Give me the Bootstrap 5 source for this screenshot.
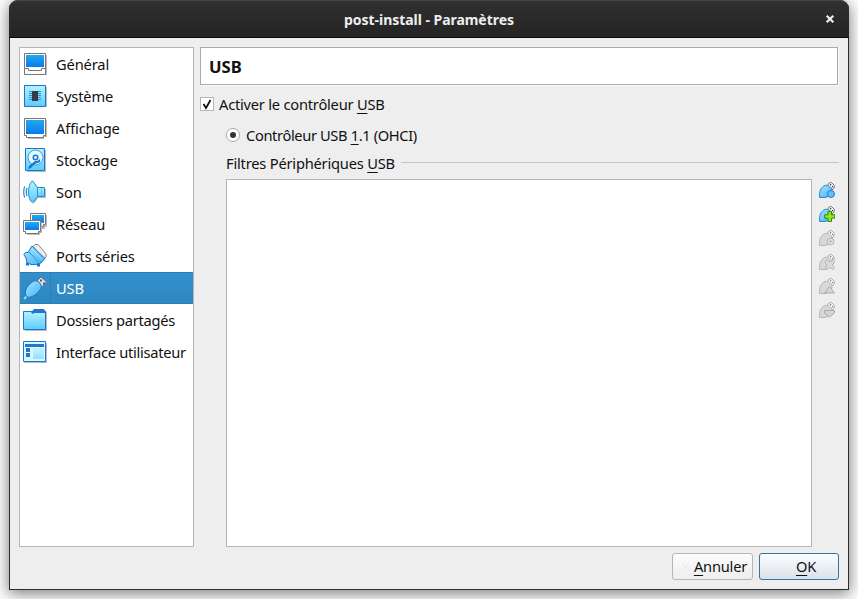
<!DOCTYPE html>
<html lang="fr">
<head>
<meta charset="utf-8">
<title>post-install - Paramètres</title>
<link href="https://cdn.jsdelivr.net/npm/bootstrap@5.3.0/dist/css/bootstrap.min.css" rel="stylesheet">
<style>
body{width:858px;height:599px;background:#fff;overflow:hidden;font:14.67px/20px "Noto Sans",sans-serif;color:#111}
.win{width:840px;height:590px;margin-left:9px;border:1px solid #2b2c2d;border-top:0;border-radius:9px 9px 0 0;background:#eee;box-shadow:0 3px 15px 1px rgba(0,0,0,.5)}
.titlebar{height:38px;margin:0 -1px;border-radius:9px 9px 0 0;background:linear-gradient(#303030,#242424);border-bottom:1px solid #070707;box-shadow:inset 0 1px #454545;color:#eee;font-weight:700;font-size:14px;letter-spacing:-.04px;padding-top:2px}
.closer{right:14px;top:14px}
.main-area{padding:9px 9px 0;height:509px}
.side{width:175px;height:500px;background:#fff;border:1px solid #b5b6b7;margin-right:6px}
.side .nav-link{height:32px;padding:0 0 0 3px;color:#111;border-radius:0;white-space:nowrap;letter-spacing:-.13px}
.side .nav-link svg{width:24px;height:24px;margin-right:9px;flex:none}
.side .nav-link.active{background:linear-gradient(#3390cc,#2e87c1);color:#fff;box-shadow:inset 0 1px #2980b9,inset 0 -1px #2980b9}
.side .nav-link.active span{border-left:1px solid #2980b9;margin-left:-6px;padding-left:5px;line-height:32px}
.side .snug{letter-spacing:-.28px}
.pane{width:639px}
.heading{height:38px;width:638px;background:#fff;border:1px solid #aaa;box-shadow:1px 1px #fafafa;font-size:16.6px;font-weight:700;padding-left:8px;padding-top:1px}
.opt{height:20px;white-space:nowrap}
.opt.enable{margin-top:9px;letter-spacing:-.22px}
.nested{margin-left:26px}
.opt.version{margin-top:11px;letter-spacing:-.37px}
.opt.caption{margin-top:8px;margin-bottom:6px;letter-spacing:-.2px}
.chk{width:14px;height:14px;background:#fff;border:1px solid #b5b6b7;margin-right:5px}
.rad{width:14px;height:14px;background:#fff;border:1px solid #aaa;margin-right:6px;margin-top:-1px}
.dot{width:6px;height:6px;background:#333}
.rule{height:1px;background:#c4c5c6;margin-left:6px;margin-bottom:2px}
.filters{width:586px;height:368px;background:#fff;border:1px solid #b5b6b7}
.tools{width:16px;margin-left:7px;padding-top:3px;gap:8px}
.tools svg{width:16px;height:16px;display:block}
.foot{padding:6px 9px 0;gap:6px}
.foot .btn{height:27px;border-radius:3px;border:1px solid #b5b6b7;padding:0;font-size:14.67px;letter-spacing:-.2px;line-height:25px;color:#111;background:linear-gradient(#fcfcfc,#eee)}
.foot .cancel{width:81px}
.foot .accept{width:80px;padding-right:2px;border-color:#2f76a2;background:linear-gradient(#fcfdfe,#dbe2ea)}
.foot svg{width:16px;height:16px}
.key{text-decoration:underline;text-decoration-thickness:1px;text-underline-offset:3px;text-decoration-skip-ink:none}
</style>
</head>
<body>
<svg width="0" height="0" class="position-absolute" aria-hidden="true">
<defs>
<linearGradient id="scr" x2="0" y2="1"><stop stop-color="#24a8ed"/><stop offset="1" stop-color="#077bef"/></linearGradient>
<linearGradient id="sky" x2="0" y2="1"><stop stop-color="#b4f3ff"/><stop offset="1" stop-color="#5ccbfd"/></linearGradient>
<linearGradient id="plug" x2="1" y2="1"><stop stop-color="#a8e8ff"/><stop offset="1" stop-color="#43afef"/></linearGradient>
<g id="bluedev"><path d="M8.500 3.500 10 1Q11.500 0 13 1l2 2q1 1.500 0 3l-2 2z" fill="#f4f4f4" stroke="#777"/><path d="M11 2h1.200v1.200H11zM13 4h1.200v1.200H13z" fill="#333"/><path d="M.6 15.400V11.500C1 7 4 3.300 7.500 3.300 10.500 3.300 13.300 6 13 9c-.5 4-4 6-7 6.400z" fill="url(#plug)" stroke="#2380cf"/></g>
<g id="graydev"><path d="M8.500 3.500 10 1Q11.500 0 13 1l2 2q1 1.500 0 3l-2 2z" fill="#f5f5f5" stroke="#aaa"/><path d="M11 2h1.200v1.200H11zM13 4h1.200v1.200H13z" fill="#777"/><path d="M.6 15.400V11.500C1 7 4 3.300 7.500 3.300 10.500 3.300 13.300 6 13 9c-.5 4-4 6-7 6.400z" fill="#d8d8d8" stroke="#b5b5b5"/></g>
</defs></svg>
<div class="win">
<header class="titlebar position-relative d-flex align-items-center justify-content-center"><span>post-install - Paramètres</span>
<svg class="closer position-absolute" width="10" height="10" viewBox="0 0 10 10"><path d="m1.700 1.700 6.600 6.600m0-6.600L1.700 8.300" stroke="#eee" stroke-width="2.200"/></svg></header>
<main class="main-area d-flex">
<nav class="side nav flex-column flex-nowrap">
<a class="nav-link d-flex align-items-center"><svg viewBox="0 0 24 24"><path d="M3 3h21v20H3z" fill="#bbb"/><path d="M1.500 1.500h21v21h-21z" fill="#fff" stroke="#777"/><path d="M3 3h18v12H3z" fill="url(#scr)"/><path d="M2 16.500h3.500v2h13v-2H22" fill="none" stroke="#777"/></svg><span>Général</span></a>
<a class="nav-link d-flex align-items-center"><svg viewBox="0 0 24 24"><path d="M3 3h21v20H3z" fill="#bbb"/><path d="M1.500 1.500h21v21h-21z" fill="url(#sky)" stroke="#1777d1"/><path d="M6 7.500h12M6 9.500h12M6 11.500h12M6 13.500h12M6 15.500h12" stroke="#348ecc"/><path d="M9 7h6v10H9z" fill="#333d49"/></svg><span>Système</span></a>
<a class="nav-link d-flex align-items-center"><svg viewBox="0 0 24 24"><path d="M3 4h21v17h-3v2H5v-2H3z" fill="#bbb"/><path d="M1.500 2.500h21v17h-2v2h-17v-2h-2z" fill="#fff" stroke="#777"/><path d="M3 4h18v14H3z" fill="url(#scr)"/></svg><span>Affichage</span></a>
<a class="nav-link d-flex align-items-center"><svg viewBox="0 0 24 24"><path d="M4 2h19v22H4z" fill="#bbb"/><path d="M2.500.5h19v22h-19z" fill="url(#sky)" stroke="#1777d1"/><circle cx="12.500" cy="9.500" r="7.500" fill="#e5fbff" stroke="#4399d5"/><circle cx="12.500" cy="9.500" r="2.200" fill="#fff" stroke="#1777d1" stroke-width="1.600"/><path d="M17 11q1 3-2 4-3 0-7 5l-3 1 1-3 6-5q2 1 5-2z" fill="#1777d1"/></svg><span>Stockage</span></a>
<a class="nav-link d-flex align-items-center"><svg viewBox="0 0 24 24"><path d="m11 3 5 6h7v9h-8l-4 6z" fill="#bbb"/><path d="M9.500.8 14.500 7.500v9L9.500 22.800Q5.500 20 5.500 12T9.500.8z" fill="url(#sky)" stroke="#258ad8" stroke-linejoin="round"/><path d="M14.500 7.500h7v9h-7z" fill="url(#sky)" stroke="#258ad8"/><path d="M18.500 8v8" stroke="#6bbdea"/><path d="M4 8q-1.500 4 0 8M1.700 6.500q-2 5.500 0 11" fill="none" stroke="#258ad8" stroke-width="1.200"/></svg><span>Son</span></a>
<a class="nav-link d-flex align-items-center"><svg viewBox="0 0 24 24"><path d="M8.500 3h15.500v12h-2v2h-12z" fill="#bbb"/><path d="M7.500 1.500h15v11h-2v2h-13z" fill="#fff" stroke="#777"/><path d="M9 3h12v8H9z" fill="url(#scr)"/><path d="M2 10h17v11h-2v2H4v-2H2z" fill="#bbb"/><path d="M.5 8.500h17v11h-2v2h-13v-2h-2z" fill="#fff" stroke="#777"/><path d="M2 10h14v8H2z" fill="url(#scr)"/></svg><span>Réseau</span></a>
<a class="nav-link d-flex align-items-center"><svg viewBox="0 0 24 24"><path d="m10 2.500 2-2h3l8 9.500v3l-2 2z" fill="#eee" stroke="#888"/><path d="M4.500 18.500v3M15.500 19.500v3" stroke="#1777d1" stroke-width="3"/><path d="M9 2 22 14.500 18 19l-5 1.500H8L4 18.500 3 14 .8 10.500 2.500 8.500H5z" fill="url(#plug)" stroke="#1777d1" stroke-linejoin="round"/><path d="m6 8 10 10.500" stroke="#3193dc"/><path d="m8.500 4.500 10.500 11" stroke="#a9e5ff"/></svg><span>Ports séries</span></a>
<a class="nav-link active d-flex align-items-center"><svg viewBox="0 0 24 24"><path d="m14 5 4-4 5.500 5-5 5z" fill="#e5e5e5" stroke="#777"/><path d="M17 3.500h2v2h-2zM20 6.500h2v2h-2z" fill="#555"/><path d="M3.500 20.500 1 23" stroke="#8bd6fa" stroke-width="2"/><path d="M2.500 19Q1.500 12 8 7q4-4 8-1 4 4 1 8-5 7-12 7.500z" fill="url(#plug)" stroke="#1777d1"/></svg><span>USB</span></a>
<a class="nav-link d-flex align-items-center snug"><svg viewBox="0 0 24 24"><path d="M2 4h22v19H2z" fill="#bbb"/><path d="M.5 3.500h22v18H.5z" fill="url(#sky)" stroke="#1777d1"/><path d="M8 4.500 11 1h10l1 2h1v2H11.500L10 6z" fill="#2375cf"/></svg><span>Dossiers partagés</span></a>
<a class="nav-link d-flex align-items-center snug"><svg viewBox="0 0 24 24"><path d="M1 3h23v20H1z" fill="#bbb"/><path d="M.5 1.500h22v20H.5z" fill="#d8f8ff" stroke="#1777d1"/><path d="M2 4h19v3H2zM3 8h4v4H3zM3 13h4v4H3z" fill="#2375cf"/><path d="M10 8h11v11H10z" fill="url(#sky)" opacity=".55"/></svg><span>Interface utilisateur</span></a>
</nav>
<section class="pane">
<h1 class="heading d-flex align-items-center mb-0">USB</h1>
<div class="opt enable d-flex align-items-center"><span class="chk d-flex"><svg width="12" height="12" viewBox="0 0 12 12"><path d="m2.500 6 2.500 4 4.500-8" fill="none" stroke="#111" stroke-width="1.800"/></svg></span><span>Activer le contrôleur <span class="key">U</span>SB</span></div>
<div class="nested d-flex flex-column">
<div class="opt version d-flex align-items-center"><span class="rad rounded-circle d-flex align-items-center justify-content-center"><span class="dot rounded-circle"></span></span><span>Contrôleur USB <span class="key">1</span>.1 (OHCI)</span></div>
<div class="opt caption d-flex align-items-center"><span>Filtres Périphériques <span class="key">U</span>SB</span><span class="rule flex-grow-1"></span></div>
<div class="d-flex"><div class="filters"></div>
<div class="tools d-flex flex-column">
<svg viewBox="0 0 16 16"><use href="#bluedev"/><circle cx="12" cy="12" r="3.500" fill="#64bdfa" stroke="#2380cf"/></svg>
<svg viewBox="0 0 16 16"><use href="#bluedev"/><path d="M9 5.500h3.500v3.300h3.200v3.400h-3.200v3.300H9v-3.300H5.700V8.800H9z" fill="#93e52c" stroke="#348b00"/></svg>
<svg viewBox="0 0 16 16"><use href="#graydev"/><circle cx="11.500" cy="11.500" r="3.500" fill="#ddd" stroke="#b5b5b5"/><circle cx="11.500" cy="11.500" r="1" fill="#aaa"/></svg>
<svg viewBox="0 0 16 16"><use href="#graydev"/><path d="m6 8 2-2 3 2 3-2 1.500 2-2 3 2 3-1.500 1.500-3-2-3 2L6 14l2-3z" fill="#ddd" stroke="#b5b5b5"/></svg>
<svg viewBox="0 0 16 16"><use href="#graydev"/><path d="m10.500 8.500 5 6.500h-10z" fill="#d5d5d5" stroke="#aaa"/></svg>
<svg viewBox="0 0 16 16"><use href="#graydev"/><path d="M5.500 8.500h10v2.500l-5 4-5-4z" fill="#d5d5d5" stroke="#aaa"/></svg>
</div></div>
</div>
</section>
</main>
<footer class="foot d-flex justify-content-end">
<button class="btn cancel d-flex align-items-center justify-content-center"><svg viewBox="0 0 16 16"><path d="m4 4 7 7m0-7-7 7" stroke="#e8e6e3"/></svg><span><span class="key">A</span>nnuler</span></button>
<button class="btn accept d-flex align-items-center justify-content-center"><svg viewBox="0 0 16 16"><path d="m3 8 3 4 6-8" fill="none" stroke="#e6ebed"/></svg><span><span class="key">O</span>K</span></button>
</footer>
</div>
<script src="https://cdn.jsdelivr.net/npm/bootstrap@5.3.0/dist/js/bootstrap.bundle.min.js"></script>
</body>
</html>
